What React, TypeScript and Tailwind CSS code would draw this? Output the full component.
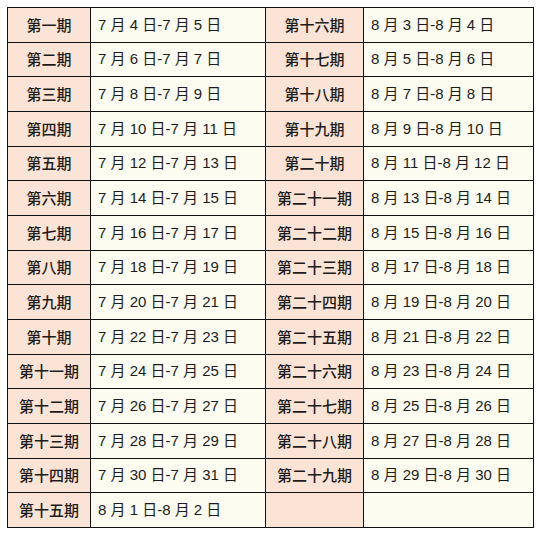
import React from 'react';

const NUMS = [
  '一', '二', '三', '四', '五', '六', '七', '八', '九', '十',
  '十一', '十二', '十三', '十四', '十五', '十六', '十七', '十八', '十九', '二十',
  '二十一', '二十二', '二十三', '二十四', '二十五', '二十六', '二十七', '二十八', '二十九'
];

// 每期两天：第一期 7月4日 起
const periods = NUMS.map((n, i) => {
  const start = new Date(2020, 6, 4 + i * 2);
  const end = new Date(2020, 6, 5 + i * 2);
  return {
    name: `第${n}期`,
    range: `${start.getMonth() + 1} 月 ${start.getDate()} 日-${end.getMonth() + 1} 月 ${end.getDate()} 日`,
  };
});

const left = periods.slice(0, 15);
const right = periods.slice(15);

const HeadCell = ({ text }: { text?: string }) => (
  <div className="bg-[#fbe4d5] flex items-center justify-center font-medium text-[15px] text-[#1c1c1c] [font-family:'Noto_Sans_CJK_SC',sans-serif]">
    {text}
  </div>
);

const DateCell = ({ text }: { text?: string }) => (
  <div className="bg-[#fcfcf0] flex items-center pl-[7px] text-[15px] text-[#1c1c1c] [font-family:'Liberation_Sans','Noto_Sans_CJK_SC',sans-serif] whitespace-pre">
    {text}
  </div>
);

export default function App() {
  return (
    <div className="w-[543px] h-[534px] bg-white pt-[7px] pl-[7px]">
      <div className="grid grid-cols-[82px_174px_97px_169px] grid-rows-[repeat(15,minmax(0,1fr))] gap-px p-px bg-[#111] w-[527px] h-[521px]">
        {left.map((l, i) => (
          <React.Fragment key={l.name}>
            <HeadCell text={l.name} />
            <DateCell text={l.range} />
            <HeadCell text={right[i]?.name} />
            <DateCell text={right[i]?.range} />
          </React.Fragment>
        ))}
      </div>
    </div>
  );
}
